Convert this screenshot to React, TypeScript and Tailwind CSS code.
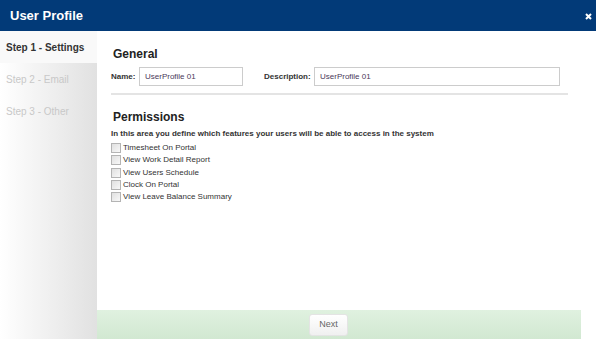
const permissions = [
  'Timesheet On Portal',
  'View Work Detail Report',
  'View Users Schedule',
  'Clock On Portal',
  'View Leave Balance Summary',
];

const steps = ['Step 1 - Settings', 'Step 2 - Email', 'Step 3 - Other'];

export default function App() {
  return (
    <div className="w-[596px] h-[345px] bg-white font-['Liberation_Sans',Arial,sans-serif] text-[#333] overflow-hidden">
      <header className="h-[31px] bg-[#023a78] flex items-center justify-between pl-[10px] pr-[4px]">
        <h1 className="text-[13px] font-bold text-white">User Profile</h1>
        <svg width="7" height="7" viewBox="0 0 7 7" className="mt-[1px]">
          <path d="M1 1 L6 6 M6 1 L1 6" stroke="#ffffff" strokeWidth="2" />
        </svg>
      </header>

      <div className="flex h-[308px]">
        <aside className="w-[97px] bg-gradient-to-r from-white to-[#e1e1e1] flex flex-col">
          {steps.map((step, i) => (
            <div
              key={step}
              className={
                i === 0
                  ? 'h-[32px] flex items-center pl-[6px] text-[10px] font-bold text-[#333] bg-[#f9f9f9]'
                  : 'h-[32px] flex items-center pl-[6px] text-[10px] text-[#c8c8c8]'
              }
            >
              {step}
            </div>
          ))}
        </aside>

        <main className="w-[484px] flex flex-col">
          <div className="flex-1 px-[14px] pt-[14px]">
            <h2 className="text-[12px] font-bold text-[#222] leading-[18px] pl-[2px]">General</h2>
            <div className="flex items-center mt-[4px] text-[8px]">
              <label className="font-bold w-[28px]">Name:</label>
              <div className="w-[104px] h-[19px] border border-[#ccc] flex items-center px-[5px] text-[#4a3a5a]">
                UserProfile 01
              </div>
              <label className="font-bold ml-[21px] w-[50px]">Description:</label>
              <div className="w-[246px] h-[19px] border border-[#ccc] flex items-center px-[5px] text-[#4a3a5a]">
                UserProfile 01
              </div>
            </div>
            <div className="h-[2px] bg-[#e4e4e4] mt-[7px] w-[457px]" />

            <h2 className="text-[12px] font-bold text-[#222] leading-[18px] pl-[2px] mt-[13px]">Permissions</h2>
            <p className="text-[8px] font-bold leading-[11px] mt-[2px]">
              In this area you define which features your users will be able to access in the system
            </p>
            <ul className="mt-[3px]">
              {permissions.map((p) => (
                <li key={p} className="flex items-center h-[12.3px] text-[8px] leading-[12px]">
                  <span className="w-[10px] h-[10px] border border-[#b4b4b4] bg-gradient-to-br from-[#e0e0e0] to-[#f8f8f8] mr-[2px]" />
                  {p}
                </li>
              ))}
            </ul>
          </div>

          <footer className="h-[29px] bg-gradient-to-b from-[#e0f1e0] to-[#d1e8d1] flex items-center pl-[212px]">
            <button className="w-[39px] h-[22px] rounded-[3px] border border-[#e4e4e4] bg-gradient-to-b from-white to-[#f0f0f0] text-[9px] text-[#666]">
              Next
            </button>
          </footer>
        </main>
      </div>
    </div>
  );
}
